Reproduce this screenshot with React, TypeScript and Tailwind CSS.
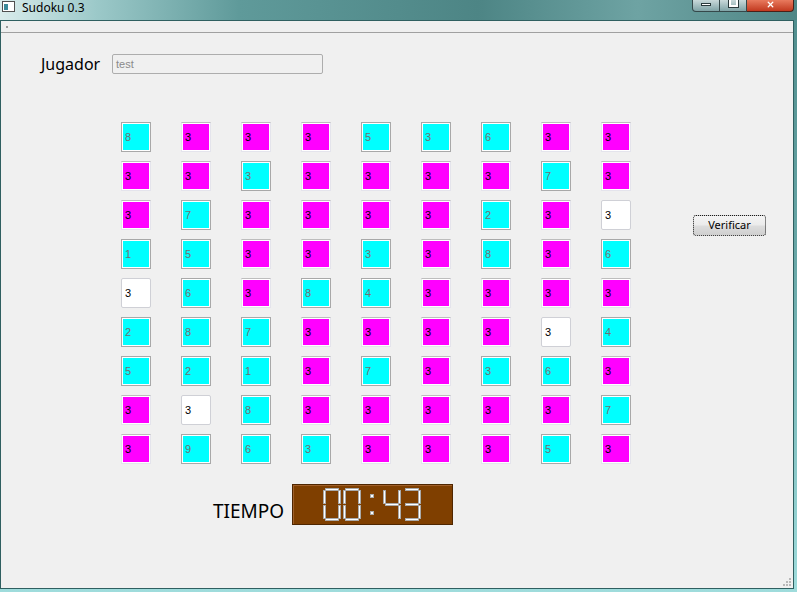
import { X } from "lucide-react";

const board = [
  "8c 3m 3m 3m 5c 3c 6c 3m 3m",
  "3m 3m 3c 3m 3m 3m 3m 7c 3m",
  "3m 7c 3m 3m 3m 3m 2c 3m 3w",
  "1c 5c 3m 3m 3c 3m 8c 3m 6c",
  "3w 6c 3m 8c 4c 3m 3m 3m 3m",
  "2c 8c 7c 3m 3m 3m 3m 3w 4c",
  "5c 2c 1c 3m 7c 3m 3c 6c 3m",
  "3m 3w 8c 3m 3m 3m 3m 3m 7c",
  "3m 9c 6c 3c 3m 3m 3m 5c 3m",
];

const Cell = ({ value, kind }: { value: string; kind: string }) => {
  if (kind === "w") {
    return (
      <div className="w-[30px] h-[30px] rounded-[2px] border border-[#cfd0d6] bg-white flex items-center pl-[3px] text-[11px] text-black">
        {value}
      </div>
    );
  }
  if (kind === "c") {
    return (
      <div className="w-[30px] h-[30px] border border-[#a8a8a8] bg-white p-px">
        <div className="w-full h-full bg-[#00ffff] flex items-center pl-[2px] text-[11px] text-[#707070]">
          {value}
        </div>
      </div>
    );
  }
  return (
    <div className="w-[30px] h-[30px] border border-[#e4e4ec] border-t-[#bdbdbd] bg-white p-px">
      <div className="w-full h-full bg-[#ff00ff] flex items-center pl-[2px] text-[11px] text-black">
        {value}
      </div>
    </div>
  );
};

// segments of an lcd digit
const segs: Record<string, string> = {
  a: "top-0 left-[2px] w-[14px] h-[3px]",
  b: "top-[2px] right-0 w-[3px] h-[14px]",
  c: "bottom-[2px] right-0 w-[3px] h-[14px]",
  d: "bottom-0 left-[2px] w-[14px] h-[3px]",
  e: "bottom-[2px] left-0 w-[3px] h-[14px]",
  f: "top-[2px] left-0 w-[3px] h-[14px]",
  g: "top-[15px] left-[2px] w-[14px] h-[3px]",
};

const digitSegs: Record<string, string> = {
  "0": "abcdef",
  "3": "abcdg",
  "4": "bcfg",
};

const LcdDigit = ({ d }: { d: string }) => (
  <div className="relative w-[18px] h-[33px]">
    {digitSegs[d].split("").map((s) => (
      <span key={s} className={`absolute bg-white border border-[#a9a9a9] ${segs[s]}`} />
    ))}
  </div>
);

const Lcd = () => (
  <div
    role="img"
    aria-label="00:43"
    className="w-[161px] h-[41px] bg-[#7f3f00] border border-[#4f2600] shadow-[inset_1px_1px_0_#a0602a] flex items-center pl-[30px] gap-[2px]"
  >
    <LcdDigit d="0" />
    <LcdDigit d="0" />
    <div className="w-[18px] h-[33px] flex flex-col items-center justify-center gap-[13px]">
      <span className="w-[4px] h-[4px] bg-white border border-[#a9a9a9]" />
      <span className="w-[4px] h-[4px] bg-white border border-[#a9a9a9]" />
    </div>
    <LcdDigit d="4" />
    <LcdDigit d="3" />
  </div>
);

export default function App() {
  return (
    <div className="w-[797px] h-[592px] overflow-hidden flex flex-col bg-[linear-gradient(180deg,#4f8c8c_0%,#6aa8a8_45%,#9fdcdc_100%)] font-['Liberation_Sans',sans-serif]">
      {/* title bar */}
      <div className="h-[20px] flex items-start shrink-0 bg-[linear-gradient(90deg,#d9ecec_0%,#9cc9c9_12%,#5f9a9a_30%,#4d8585_60%,#6ea3a3_80%,#4f8686_100%)]">
        <div className="ml-[2px] mt-[1px] w-[13px] h-[11px] bg-white border border-[#505050] flex items-end">
          <span className="ml-[1px] mb-[1px] w-[4px] h-[6px] bg-[#3a8a9a]" />
        </div>
        <span className="ml-[7px] text-[12px] leading-[15px] text-black font-['Noto_Sans',sans-serif]">Sudoku 0.3</span>
        <div className="ml-auto mr-[3px] flex h-[12px]">
          <div className="w-[28px] h-full border border-[#35484a] border-t-0 rounded-bl-[4px] bg-[linear-gradient(180deg,#c9d9da,#7fa3a6)] flex justify-center items-start pt-[3px]">
            <span className="w-[10px] h-[3px] bg-white border border-[#2a3a3c]" />
          </div>
          <div className="w-[27px] h-full border border-[#35484a] border-t-0 border-l-0 bg-[linear-gradient(180deg,#c9d9da,#7fa3a6)] flex justify-center items-start">
            <span className="w-[9px] h-[7px] border-2 border-t-0 border-white outline outline-1 outline-[#2a3a3c]" />
          </div>
          <div className="w-[47px] h-full border border-[#4a2018] border-t-0 border-l-0 rounded-br-[4px] bg-[linear-gradient(180deg,#e87a5e,#c2391f)] flex justify-center items-start">
            <X size={9} strokeWidth={3.5} className="text-white" />
          </div>
        </div>
      </div>

      {/* client */}
      <div className="flex-1 mr-[3px] mb-[3px] border border-[#2f5f60] bg-[#f0f0f0] flex flex-col text-black">
        <div className="h-[12px] bg-[#efefef] border-b border-[#a0a0a0] flex items-center pl-[5px]">
          <span className="w-[2px] h-[2px] bg-[#9a9a9a]" />
        </div>

        <div className="flex-1 flex flex-col relative">
          <div className="mt-[21px] ml-[40px] flex items-center">
            <span className="w-[71px] text-[16px] leading-[20px] font-['Noto_Sans',sans-serif]">Jugador</span>
            <div className="w-[211px] h-[20px] border border-[#adadad] rounded-[2px] bg-[#f0f0f0] flex items-center pl-[3px] text-[11px] text-[#8a8a8a]">
              test
            </div>
          </div>

          <div className="mt-[48px] ml-[120px] flex items-start">
            <div className="grid grid-cols-9 gap-x-[30px] gap-y-[9px]">
              {board.map((row, r) =>
                row.split(" ").map((cell, c) => (
                  <Cell key={`${r}-${c}`} value={cell[0]} kind={cell[1]} />
                ))
              )}
            </div>
            <button
              type="button"
              className="ml-[62px] mt-[93px] w-[73px] h-[21px] rounded-[3px] border border-dotted border-[#1a1a1a] bg-[linear-gradient(180deg,#f4f4f4_0%,#ebebeb_48%,#dddddd_52%,#cfcfcf_100%)] text-[11px] font-['Noto_Sans',sans-serif] text-black"
            >
              Verificar
            </button>
          </div>

          <div className="mt-[20px] ml-[212px] flex items-center">
            <span className="w-[79px] pt-[12px] text-[19px] leading-[24px] font-['Noto_Sans',sans-serif]">TIEMPO</span>
            <Lcd />
          </div>

          <div className="absolute right-[2px] bottom-[2px] grid grid-cols-3 gap-[1px]">
            <span />
            <span />
            <span className="w-[2px] h-[2px] bg-[#b8b8b8]" />
            <span />
            <span className="w-[2px] h-[2px] bg-[#b8b8b8]" />
            <span className="w-[2px] h-[2px] bg-[#b8b8b8]" />
            <span className="w-[2px] h-[2px] bg-[#b8b8b8]" />
            <span className="w-[2px] h-[2px] bg-[#b8b8b8]" />
            <span className="w-[2px] h-[2px] bg-[#b8b8b8]" />
          </div>
        </div>
      </div>
    </div>
  );
}
